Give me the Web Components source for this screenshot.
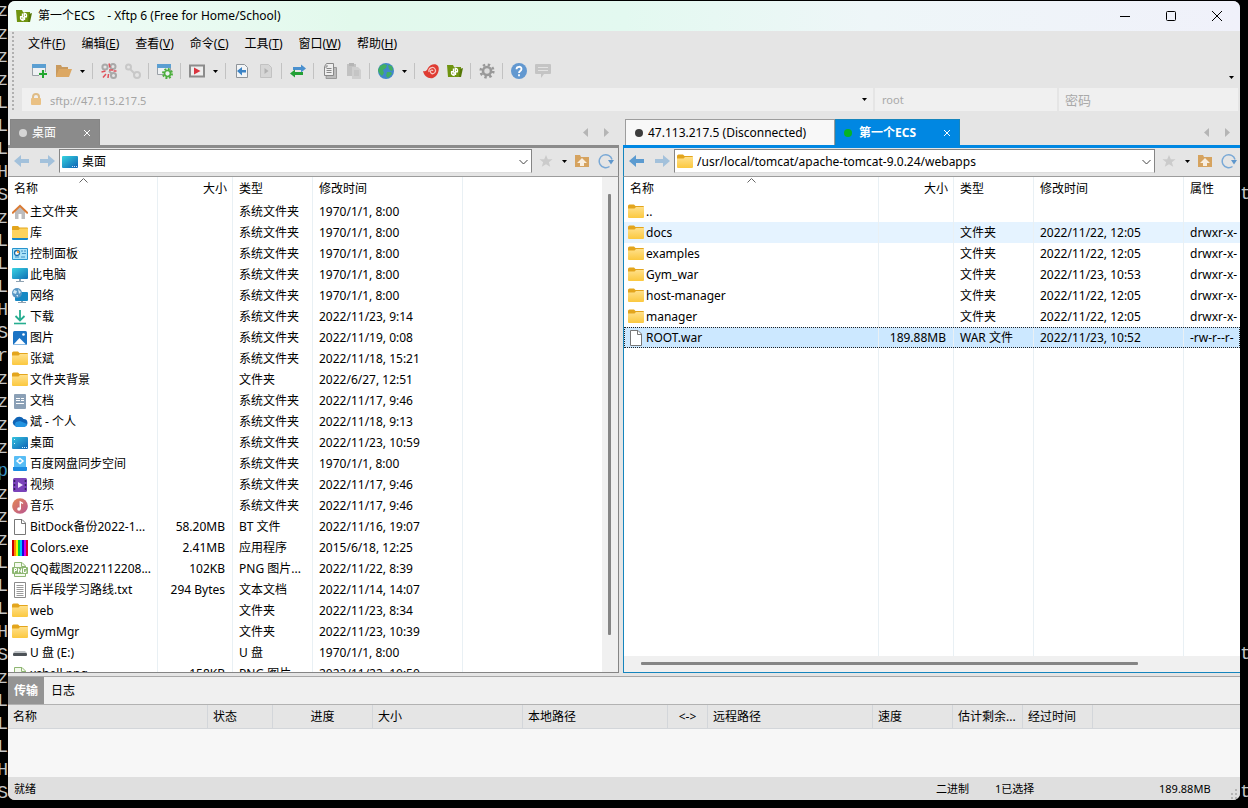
<!DOCTYPE html>
<html lang="zh-CN">
<head>
<meta charset="utf-8">
<title>第一个ECS - Xftp 6</title>
<style>
  html, body { margin: 0; height: 100%; background: #000; overflow: hidden; }
  body { font: 12px/16px "Noto Sans", "Noto Sans CJK SC", sans-serif; color: #000; }
</style>
</head>
<body>
<desk-top>
  <app-window>
    <title-bar></title-bar>
    <tool-area>
      <menu-bar></menu-bar>
      <tool-bar></tool-bar>
      <address-bar></address-bar>
    </tool-area>
    <work-space>
      <file-pane kind="local"></file-pane>
      <file-pane kind="remote"></file-pane>
    </work-space>
    <transfer-panel></transfer-panel>
    <status-bar></status-bar>
  </app-window>
</desk-top>

<script>
const ICONS = {
  app: '<path d="M0 2h6l1 2h7v10H1z" fill="#6f9410"/><path d="M13 6l3-1-2 9h-2z" fill="#557707"/><path d="M6.500 5.500v3.200H4.600C4.200 11 5.200 12 7 12.300V9M8.500 12V8.700h1.900C10.800 6.500 10 5.500 8.300 5.200V8" fill="none" stroke="#fff" stroke-width="1.400"/>',
  newwin: '<path d="M.5 1.500h13v11H.5z" fill="#eef1f3" stroke="#9aa0a6"/><path d="M0 1h14v4H0z" fill="#5b9fd2"/><path d="M11 7v8M7 11h8" stroke="#e5e5e5" stroke-width="4"/><path d="M11 7v8M7 11h8" stroke="#22a630" stroke-width="2"/>',
  open: '<path d="M0 2h5l1 2h6v3H4L1 14H0z" fill="#c99a5e"/><path d="M3 6h13l-3 8H0z" fill="#dca864"/>',
  unlink: '<g fill="none" stroke="#a9a9a9" stroke-width="2"><circle cx="4" cy="4" r="2.600"/><circle cx="12" cy="3.500" r="2.500"/><circle cx="12.500" cy="12.500" r="2.500"/><path d="M8 8l3 3"/></g><path d="M8 .5l1 4M12 7l-4 0M15.500 8h-3M.5 9l4-1M2 14.500l3-3.500M7 15l.500-4" stroke="#e0505a" stroke-width="1.500"/>',
  link: '<g fill="none" stroke="#c8c8c8" stroke-width="2"><circle cx="3.500" cy="4" r="2.500"/><circle cx="12" cy="12" r="3"/><path d="M5 6l5 5"/></g>',
  wingear: '<path d="M.5 1.500h13v10H.5z" fill="#eef1f3" stroke="#9aa0a6"/><path d="M0 1h14v4H0z" fill="#5b9fd2"/><circle cx="10.500" cy="10.500" r="4.500" fill="none" stroke="#4caf3d" stroke-width="2" stroke-dasharray="2 1.500"/><circle cx="10.500" cy="10.500" r="3" fill="#eef1f3" stroke="#4caf3d" stroke-width="1.700"/>',
  play: '<rect x="1" y="2.500" width="14" height="11" fill="#eee" stroke="#8c8c8c" stroke-width="2"/><path d="M5 4.500v7L11.500 8z" fill="#d9343f"/>',
  pageleft: '<path d="M2.500 1.500h8l3 3v10h-11z" fill="#f2f4f6" stroke="#8e9499"/><path d="M3 8l5-4v3h4v2.500H8v3z" fill="#3c84c6"/>',
  pageright: '<path d="M2.500 1.500h8l3 3v10h-11z" fill="#d6d6d6" stroke="#c2c2c2"/><path d="M10.500 8L6.500 5v6z" fill="#b2b2b2"/>',
  swap: '<path d="M16 5.500l-5-4V4H3v3h8v2.500z" fill="#4a90cf"/><path d="M0 10.500l5-4V9h8v3H5v2.500z" fill="#23a035"/>',
  copy: '<path d="M5 4.500h9.500v11H4z" fill="#bbb" stroke="#999"/><path d="M4.500.5h7v12h-9v-9z" fill="#eee" stroke="#888"/><path d="M4.500 5.500h5M4.500 7.500h5M4.500 9.500h5M5 2v2H3" fill="none" stroke="#888"/>',
  paste: '<path d="M1 1h9v12H1z" fill="#c2c2c2"/><path d="M3 0h5v3H3z" fill="#b5b5b5"/><path d="M6 4h6l3 3v9H6z" fill="#cfcfcf"/><path d="M8 8h5M8 10h5M8 12h5" stroke="#bbb"/>',
  globe: '<circle cx="8" cy="8" r="8" fill="#4187cb"/><path d="M2 3l4-2 3 1-1 3-3 2 1 3-2 3-3-3-1-3zM10 2l4 1 1 4-2 1-2-2zM9 9l4 0 1 2-4 4-2-2z" fill="#41ae62"/>',
  shell: '<path d="M0 8c3 1 4-1 5-3 2-4 8-5 10-2 2 3 0 10-5 12C5 16 1 13 0 8z" fill="#df3c33"/><path d="M6 9c-1-4 4-6 6-3s-2 6-4 4 1-4 2-2" fill="none" stroke="#f5c5bf" stroke-width="1.200"/>',
  gear: '<circle cx="8" cy="8" r="6.300" fill="none" stroke="#999" stroke-width="2.600" stroke-dasharray="2.400 2.548"/><circle cx="8" cy="8" r="4" fill="#ddd" stroke="#999" stroke-width="2.600"/>',
  help: '<circle cx="8" cy="8" r="8" fill="#6298d0"/><path d="M5.500 6.200c0-3.200 5-3.200 5-.2C10.500 8 8 8 8 10M8 11.200v2" fill="none" stroke="#fff" stroke-width="1.800"/>',
  chat: '<path d="M1 1h14q1 0 1 1v8q0 1-1 1H9l-3 4v-4H1q-1 0-1-1V2q0-1 1-1z" fill="#c4c4c4"/><path d="M3 4.500h10M3 7.500h10" stroke="#e2e2e2"/>',
  lock: '<path d="M5 8V5a3 3 0 016 0v3" fill="none" stroke="#dfbc86" stroke-width="2"/><rect x="3" y="6" width="10" height="7" rx="1" fill="#eac184"/>',
  back: '<path d="M0 8l7-6v4h8v4H7v4z" fill="var(--arrow)"/>',
  fwd: '<path d="M16 8L9 2v4H1v4h8v4z" fill="#a3c1db"/>',
  star: '<path d="M8 2l1.800 4.200h4.700l-3.600 3.100 1.300 4.500L8 11.200l-4.200 2.600 1.300-4.500L1.500 6.200h4.700z" fill="#cbcbcb"/>',
  updir: '<path d="M1 2h5l1 2h8v10H1z" fill="#d6a35f"/><path d="M8 5l5 5h-3v3H6v-3H3z" fill="#f8eee0"/>',
  refresh: '<path d="M11.500 13.500A6.500 6.500 0 1114 6.500" fill="none" stroke="#7aa9d6" stroke-width="1.500"/><path d="M10 7h6l-3 4.500z" fill="#5f97cc"/>',
  folder: '<path d="M0 2q0-1.500 1.500-1.500H6L7.500 2H15q1 0 1 1v2H0z" fill="#e3a51d"/><path d="M0 4.500h6.500L8 3h8v10q0 1-1 1H1q-1 0-1-1z" fill="url(#f)"/><defs><linearGradient id="f" x2="0" y2="1"><stop stop-color="#ffe08a"/><stop offset="1" stop-color="#fbc83f"/></linearGradient></defs>',
  library: '<path d="M0 2q0-1 1-1h5l1.500 1.500H15q1 0 1 1V6H0z" fill="#e3a51d"/><path d="M0 5h6.500L8 3.500h8V13H0z" fill="#fdd35d"/><path d="M0 13h16v1q0 1-1 1H1q-1 0-1-1z" fill="#1687c8"/>',
  home: '<path d="M3 7l5-5 5 5v8h-3.500v-5h-3v5H3z" fill="#bcbcbe"/><path d="M.8 8.800L8 1.800l7.200 7" fill="none" stroke="#da7b35" stroke-width="2" stroke-linecap="round"/>',
  control: '<rect y="2" width="16" height="12" rx="1" fill="#2794ce"/><rect x="1" y="3" width="14" height="10" fill="#a9e2f8"/><circle cx="5" cy="7" r="2.500" fill="#fff" stroke="#176ba8" stroke-width="1.300"/><path d="M5 7V4.500A2.500 2.500 0 017.500 7z" fill="#f39b3b"/><path d="M9 5h2M12 5h2M10 7.500h4M3 11h4M9 11h4" stroke="#3f8fc4"/>',
  pc: '<rect x="0" y="1" width="16" height="11" rx="1" fill="url(#p)"/><path d="M7 12h2v2H7zM4 14h8v1H4z" fill="#8fa3b3"/><defs><linearGradient id="p" x2="1" y2="1"><stop stop-color="#3ad3e2"/><stop offset="1" stop-color="#0f6fb5"/></linearGradient></defs>',
  network: '<rect x="3" y="4" width="13" height="9" rx="1" fill="#1588c4"/><path d="M9 13h2v1H9zM6 14h8v1H6z" fill="#8fa3b3"/><circle cx="5" cy="5" r="5" fill="#5796c4"/><path d="M2 2l3 1-1 3-3-1zM6 1l3 3-2 2zM4 7l2 0 0 2z" fill="#cfe8f5"/>',
  download: '<path d="M8 1v10M3.500 7L8 11.500 12.500 7" fill="none" stroke="#26ad90" stroke-width="1.800"/><path d="M2 14.500h12" stroke="#26ad90" stroke-width="1.600"/>',
  picture: '<rect x="1" y="1" width="14" height="14" rx="1.500" fill="#1b74c5"/><path d="M1.500 14.500l6-6.500 6.500 6.500z" fill="#fff"/><circle cx="11.500" cy="4.500" r="1.300" fill="#fff"/>',
  document: '<rect x="2" y="1" width="12" height="15" rx="1" fill="#8ba0b6"/><path d="M4 5.500h4M4 7.500h4M9 5.500h3M9 7.500h3M4 10.500h8" stroke="#fff" stroke-width="1.200"/>',
  cloud: '<path d="M4 12.500a4 4 0 01-1-7.500 5 5 0 018.500 0 3.800 3.800 0 011 7.500z" fill="#0f63b5"/><path d="M4 13a4 4 0 010-5l4-1 7 3a3 3 0 01-2.500 3z" fill="#2293e0"/>',
  desktop: '<rect y="2" width="16" height="12" rx="1" fill="url(#d)"/><path d="M10 12.500h5" stroke="#cdf" stroke-dasharray="1 1"/><defs><linearGradient id="d" x2="1" y2="1"><stop stop-color="#35d3df"/><stop offset="1" stop-color="#0d60b4"/></linearGradient></defs>',
  desktop2: '<rect y="2" width="16" height="12" rx="1" fill="url(#e)"/><path d="M2.500 4v2M2.500 8v2M10 12.500h5" stroke="#d6f6ff" stroke-dasharray="1 1"/><defs><linearGradient id="e" x2="1" y2="1"><stop stop-color="#35c3df"/><stop offset="1" stop-color="#0d60b4"/></linearGradient></defs>',
  sync: '<rect x="2" y="0" width="12" height="12" rx="1" fill="#58bdf5"/><path d="M1 11h14v3q0 1-1 1H2q-1 0-1-1z" fill="#1b8de2"/><path d="M8 2.500L11 5 8 7.500 5 5z" fill="none" stroke="#fff" stroke-width="1.400"/>',
  video: '<rect x="1" y="1" width="14" height="14" rx="1.500" fill="#7a43ba"/><path d="M2.500 3v11M13.500 3v11" stroke="#33205e" stroke-width="1.500" stroke-dasharray="2 2"/><path d="M6 5v6l5-3z" fill="#f0e4ff"/>',
  music: '<circle cx="8" cy="8" r="7.800" fill="url(#m)"/><path d="M8.300 11V4l2.700 1.500" fill="none" stroke="#fff" stroke-width="1.400"/><circle cx="7" cy="11" r="1.800" fill="#fff"/><defs><linearGradient id="m" x2="1" y2="1"><stop stop-color="#e58a54"/><stop offset="1" stop-color="#b85391"/></linearGradient></defs>',
  file: '<path d="M2.500.5h7.500l3.500 3.500v11.500h-11z" fill="#fff" stroke="#777"/><path d="M9.500.5V4.500h4" fill="none" stroke="#777"/>',
  text: '<path d="M2.500.5h11v15h-11z" fill="#fff" stroke="#8a8a8a"/><path d="M4.500 3.500h7M4.500 5.500h7M4.500 7.500h7M4.500 9.500h7M4.500 11.500h7M4.500 13.500h7" stroke="#9a9a9a"/>',
  colors: '<path d="M0 0h2v16H0z" fill="#c00"/><path d="M2 0h2v16H2z" fill="#f80"/><path d="M4 0h2v16H4z" fill="#ef0"/><path d="M6 0h2v16H6z" fill="#0c4"/><path d="M8 0h2v16H8z" fill="#0bf"/><path d="M10 0h2v16h-2z" fill="#20d"/><path d="M12 0h2v16h-2z" fill="#c0e"/><path d="M14 0h2v16h-2z" fill="#e00030"/>',
  png: '<path d="M2.500 8V1.500H10L13.500 5v10.500h-11V12" fill="#f4faee" stroke="#8fb673"/><path d="M9.500 1.500v4h4" fill="none" stroke="#8fb673"/><rect y="6" width="16" height="7" rx="1" fill="#8db772"/><path d="M2.500 11.500v-4h2v2h-2M6.500 11.500v-4l3 4v-4M14 7.500h-2.500v4H14v-2" fill="none" stroke="#fff"/>',
  disk: '<path d="M3 6h10l2 2H1z" fill="#bfc3c6"/><rect x="1" y="8" width="14" height="3" rx="1" fill="#4c5257"/>'
};

const RESET = `
  *{box-sizing:border-box}
  button{font:inherit;color:inherit;background:none;border:0;padding:0;margin:0;display:flex;align-items:center}
  input{font:inherit;color:inherit;background:none;border:0;padding:0;margin:0;outline:0;min-width:0}
`;

/* Registers an element whose shadow root is filled from render(element). */
function element(tag, css, render) {
  customElements.define(tag, class extends HTMLElement {
    constructor() { super(); this.attachShadow({ mode: 'open' }); }
    connectedCallback() {
      const t = document.createElement('template');
      t.innerHTML = `<style>${RESET}${css}</style>${render(this)}`;
      this.shadowRoot.replaceChildren(t.content.cloneNode(true));
    }
  });
}
const icon = n => `<ui-icon name="${n}"></ui-icon>`;

element('ui-icon', `:host{display:block;flex:none;width:16px;height:16px}svg{display:block}`,
  el => `<svg width="16" height="16" viewBox="0 0 16 16" aria-hidden="true">${ICONS[el.getAttribute('name')]}</svg>`);

element('ui-caret', `:host{display:block;flex:none;width:5px;height:3px}svg{display:block}`,
  () => `<svg width="5" height="3"><path d="M0 0h5L2.500 3z" fill="#000"/></svg>`);

/* Terminal behind the window: only slivers of its text show on both sides. */
element('desk-top', `
  :host{display:grid;grid-template-columns:8px minmax(0,1fr) 8px;height:100vh;color:#c4c4c4;font:18px/23px "Liberation Mono",monospace}
  div{min-height:0}
  .l{overflow:hidden;display:flex;flex-direction:column;align-items:flex-end}
  b{color:#3b93c4;font-weight:400}
  .mid{padding:1px 0 8px;min-width:0;display:grid}
  .r{display:flex;flex-direction:column;overflow:hidden;padding-top:183px}
  span{height:23px;flex:none}
`, () => `<div class="l" aria-hidden="true">${[...'zzzzLLLHSzLLLHSrzzzzpzzzLLLHSzLLLHS'].map(c => c === 'p' ? '<b>p</b>' : `<span>${c}</span>`).join('')}</div>
  <div class="mid"><slot></slot></div>
  <div class="r" aria-hidden="true">${['t', ...Array(19).fill(''), 't', ...Array(5).fill(''), 't'].map(c => `<span>${c}</span>`).join('')}</div>`);

element('app-window', `
  :host{display:flex;flex-direction:column;min-width:0;min-height:0;background:#e5e5e5;border-radius:7px;overflow:hidden;color:#000;font:12px/16px "Noto Sans","Noto Sans CJK SC",sans-serif}
`, () => `<slot></slot>`);

element('title-bar', `
  :host{display:flex;align-items:center;height:30px;flex:none;padding-left:8px;background:linear-gradient(90deg,#f1fcf8 0%,#e2f9ec 28%,#e3f9f0 50%,#eef6f8 70%,#f0f1fa 100%)}
  h1{font:inherit;margin:0 0 0 6px;flex:1;white-space:pre}
  button{width:46px;height:30px;justify-content:center}
`, () => `${icon('app')}<h1>第一个ECS    - Xftp 6 (Free for Home/School)</h1>
  <button aria-label="最小化"><svg width="10" height="10"><path d="M0 5.500h10" stroke="#000"/></svg></button>
  <button aria-label="最大化"><svg width="10" height="10"><rect x=".5" y=".5" width="9" height="9" rx="1" fill="none" stroke="#000"/></svg></button>
  <button aria-label="关闭"><svg width="10" height="10"><path d="M0 0l10 10M10 0L0 10" stroke="#000"/></svg></button>`);

element('tool-area', `
  :host{display:grid;grid-template-columns:12px minmax(0,1fr);padding:1px 2px 8px 2px;flex:none}
  .grip{width:2px;margin-left:2px;background:repeating-linear-gradient(#b0b0b0 0 2px,transparent 2px 4px)}
`, () => `<div class="grip"></div><div><slot></slot></div>`);

element('menu-bar', `:host{display:block}nav{display:flex;gap:16px;height:24px;padding-left:6px}`,
  () => `<nav>${[['文件', 'F'], ['编辑', 'E'], ['查看', 'V'], ['命令', 'C'], ['工具', 'T'], ['窗口', 'W'], ['帮助', 'H']]
    .map(([t, k]) => `<button><span>${t}(<u>${k}</u>)</span></button>`).join('')}</nav>`);

element('tool-bar', `
  :host{display:flex;align-items:center;height:32px;padding:0 0 2px 6px;box-sizing:border-box}
  button{width:24px;height:24px;justify-content:center}
  button.c{width:13px}
  i{width:1px;height:16px;margin:0 4px 0 3px;background:#c2c2c2}
  .more{margin:12px 0 0 auto}
`, () => 'newwin open ^ | unlink link | wingear | play ^ | pageleft pageright | swap | copy paste | globe ^ | shell app | gear | help chat'
    .split(' ').map(n => n === '|' ? '<i></i>' : n === '^' ? '<button class="c" aria-label="更多"><ui-caret></ui-caret></button>'
      : `<button aria-label="${n}">${icon(n)}</button>`).join('') + '<button class="c more" aria-label="选项"><ui-caret></ui-caret></button>');

element('address-bar', `
  :host{display:grid;grid-template-columns:minmax(0,851fr) minmax(0,182fr) minmax(0,179fr);gap:2px;height:23px;color:#a5a5a5;font-size:11px}
  label{display:flex;align-items:center;background:#f0f0f0;padding:0 7px}
  input{flex:1;padding-top:2px}
  input::placeholder{color:#a9a9a9;opacity:1}
  .h{gap:6px;padding:0 6px}
  .u input{padding:0}
  .p{font-size:13px;padding:0 6px}
  .p input{padding:0}
`, () => `<label class="h">${icon('lock')}<input aria-label="主机" value="sftp://47.113.217.5"><ui-caret></ui-caret></label>
  <label class="u"><input aria-label="用户名" placeholder="root"></label>
  <label class="p"><input aria-label="密码" type="password" placeholder="密码"></label>`);

element('work-space', `:host{flex:1;min-height:0;display:grid;grid-template-columns:minmax(0,611fr) minmax(0,617fr);gap:4px}`, () => `<slot></slot>`);

const F = '系统文件夹';
const PANES = {
  local: {
    tabs: [{ text: '桌面', dot: '#d5d5d5', cls: 'on' }],
    icon: 'desktop', path: '桌面', cols: [150, 75, 80, 150], heads: ['名称', '大小', '类型', '修改时间', ''],
    rows: [
      ['home', '主文件夹', '', F, '1970/1/1, 8:00'], ['library', '库', '', F, '1970/1/1, 8:00'],
      ['control', '控制面板', '', F, '1970/1/1, 8:00'], ['pc', '此电脑', '', F, '1970/1/1, 8:00'],
      ['network', '网络', '', F, '1970/1/1, 8:00'], ['download', '下载', '', F, '2022/11/23, 9:14'],
      ['picture', '图片', '', F, '2022/11/19, 0:08'], ['folder', '张斌', '', F, '2022/11/18, 15:21'],
      ['folder', '文件夹背景', '', '文件夹', '2022/6/27, 12:51'], ['document', '文档', '', F, '2022/11/17, 9:46'],
      ['cloud', '斌 - 个人', '', F, '2022/11/18, 9:13'], ['desktop2', '桌面', '', F, '2022/11/23, 10:59'],
      ['sync', '百度网盘同步空间', '', F, '1970/1/1, 8:00'], ['video', '视频', '', F, '2022/11/17, 9:46'],
      ['music', '音乐', '', F, '2022/11/17, 9:46'], ['file', 'BitDock备份2022-1...', '58.20MB', 'BT 文件', '2022/11/16, 19:07'],
      ['colors', 'Colors.exe', '2.41MB', '应用程序', '2015/6/18, 12:25'], ['png', 'QQ截图2022112208...', '102KB', 'PNG 图片...', '2022/11/22, 8:39'],
      ['text', '后半段学习路线.txt', '294 Bytes', '文本文档', '2022/11/14, 14:07'], ['folder', 'web', '', '文件夹', '2022/11/23, 8:34'],
      ['folder', 'GymMgr', '', '文件夹', '2022/11/23, 10:39'], ['disk', 'U 盘 (E:)', '', 'U 盘', '1970/1/1, 8:00'],
      ['png', 'xshell.png', '158KB', 'PNG 图片...', '2022/11/22, 10:50']
    ]
  },
  remote: {
    tabs: [{ text: '47.113.217.5 (Disconnected)', dot: '#3c3c3c', cls: 'off' }, { text: '第一个ECS', dot: '#06b424', cls: 'on live' }],
    icon: 'folder', path: '/usr/local/tomcat/apache-tomcat-9.0.24/webapps', cols: [255, 75, 80, 150], heads: ['名称', '大小', '类型', '修改时间', '属性'],
    rows: [
      ['folder', '..', '', '', '', ''], ['folder', 'docs', '', '文件夹', '2022/11/22, 12:05', 'drwxr-x-', 'hover'],
      ['folder', 'examples', '', '文件夹', '2022/11/22, 12:05', 'drwxr-x-'], ['folder', 'Gym_war', '', '文件夹', '2022/11/23, 10:53', 'drwxr-x-'],
      ['folder', 'host-manager', '', '文件夹', '2022/11/22, 12:05', 'drwxr-x-'], ['folder', 'manager', '', '文件夹', '2022/11/22, 12:05', 'drwxr-x-'],
      ['file', 'ROOT.war', '189.88MB', 'WAR 文件', '2022/11/23, 10:52', '-rw-r--r-', 'sel']
    ]
  }
};

element('file-pane', `
  :host{display:flex;flex-direction:column;min-width:0;min-height:0;--accent:#8b8b8b;--line:#858585;--arrow:#a3c1db}
  :host([kind=remote]){--accent:#0087e2;--line:#1685bd;--arrow:#5c9bd0}
  pane-list{flex:1;min-height:0}
`, el => `<pane-tabs kind="${el.getAttribute('kind')}"></pane-tabs><pane-nav kind="${el.getAttribute('kind')}"></pane-nav><pane-list kind="${el.getAttribute('kind')}"></pane-list>`);

element('pane-tabs', `
  :host{display:flex;height:29px;padding-left:2px;border-bottom:3px solid var(--accent);flex:none;box-sizing:border-box}
  .tab{height:26px;padding:0 8px;gap:5px;border:1px solid #9d9d9d;border-bottom:0;flex:none}
  .tab span{flex:1;text-align:left;white-space:nowrap}
  .on{background:var(--accent);border-color:var(--line);color:#fff;width:90px}
  .off{background:#f8f8f8;width:210px;padding-left:9px}
  .live{width:125px;font-weight:700;gap:7px}
  .dot{width:8px;height:8px;border-radius:50%;flex:none}
  .x{flex:none;margin-right:1px}
  .go{width:20px;justify-content:center}
  .first{margin-left:auto}
  .last{margin-right:3px}
`, el => PANES[el.getAttribute('kind')].tabs.map(t => `<button class="tab ${t.cls}"><i class="dot" style="background:${t.dot}"></i><span>${t.text}</span>${t.cls.startsWith('on') ? '<svg class="x" width="6" height="6"><path d="M0 0l6 6M6 0L0 6" stroke="#fff"/></svg>' : ''}</button>`).join('') +
  `<button class="go first" aria-label="向左"><svg width="6" height="9"><path d="M5 0v9L0 4.500z" fill="#b5b5b5"/></svg></button><button class="go last" aria-label="向右"><svg width="6" height="9"><path d="M1 0v9l5-4.500z" fill="#b5b5b5"/></svg></button>`);

element('pane-nav', `
  :host{display:flex;align-items:center;height:29px;box-sizing:border-box;padding:0 4px 2px 5px;flex:none;border-bottom:1px solid #9c9c9c;border-left:1px solid transparent;border-right:1px solid var(--line)}
  :host([kind=remote]){border-left-color:var(--line);border-right:0;padding-right:3px}
  .path{flex:1;display:flex;align-items:center;gap:4px;height:24px;background:#fff;border:1px solid #858585;border-bottom-color:#ddd;padding:2px 3px 0 2px;margin:0 6px 0 4px;min-width:0}
  .path input{flex:1}
  .b{margin-right:9px}
  .c{width:20px;justify-content:center;height:16px}
  .r{margin-left:8px}
`, el => { const p = PANES[el.getAttribute('kind')]; return `
  <button class="b" aria-label="后退">${icon('back')}</button><button aria-label="前进">${icon('fwd')}</button>
  <label class="path">${icon(p.icon)}<input aria-label="路径" value="${p.path}"><svg width="9" height="5"><path d="M.5 0l4 4 4-4" fill="none" stroke="#444"/></svg></label>
  <button aria-label="收藏">${icon('star')}</button><button class="c" aria-label="收藏列表"><ui-caret></ui-caret></button>
  <button aria-label="上一级">${icon('updir')}</button><button class="r" aria-label="刷新">${icon('refresh')}</button>`; });

element('pane-list', `
  :host{display:flex;background:#fff;border-bottom:1px solid var(--line);overflow:hidden}
  :host([kind=local]){border-right:1px solid var(--line)}
  :host([kind=remote]){flex-direction:column;border-left:1px solid var(--line)}
  .view{flex:1;min-width:0;min-height:0;overflow:hidden}
  table{width:100%;height:100%;table-layout:fixed;border-collapse:separate;border-spacing:0}
  th,td{padding:0 6px;border-right:1px solid #e9f0f4;white-space:nowrap;overflow:hidden;text-align:left;font-weight:400;line-height:16px}
  th:last-child,td:last-child{border-right:0;padding-right:0}
  th{height:24px;position:relative}
  td{height:21px}
  td:first-child{padding-left:4px;padding-right:0}
  .n{text-align:right;padding-right:7px}
  th.n{padding-right:5px}
  .name{display:flex;align-items:center;gap:2px}
  .fill td{height:auto}
  .hover{background:#e5f3ff}
  .sel{background:#cce8ff;outline:1px dotted #222;outline-offset:-1px}
  .sort{position:absolute;left:50%;top:1px;margin-left:-4px}
  .v{width:16px;background:#f0f0f0;padding:17px 7px 37px 6px;display:flex;flex:none}
  .h{height:16px;background:#f0f0f0;padding:6px 102px 7px 17px;display:flex;flex:none}
  .thumb{flex:1;background:#858585;border-radius:1px}
`, el => { const k = el.getAttribute('kind'), p = PANES[k]; return `
  <div class="view"><table>
  <colgroup>${p.cols.map(w => `<col style="width:${w}px">`).join('')}<col></colgroup>
  <thead><tr>${p.heads.map((h, i) => `<th scope="col"${i === 1 ? ' class="n"' : ''}>${h}${i ? '' : '<svg class="sort" width="9" height="5"><path d="M.5 4.500l4-4 4 4" fill="none" stroke="#666"/></svg>'}</th>`).join('')}</tr></thead>
  <tbody>${p.rows.map(r => `<tr class="${r[6] || ''}"><td><div class="name">${icon(r[0])}<span>${r[1]}</span></div></td><td class="n">${r[2]}</td><td>${r[3]}</td><td>${r[4]}</td><td>${r[5] || ''}</td></tr>`).join('')}
  <tr class="fill"><td></td><td></td><td></td><td></td><td></td></tr></tbody></table></div>
  <div class="${k === 'local' ? 'v' : 'h'}"><div class="thumb"></div></div>`; });

element('transfer-panel', `
  :host{display:block;box-sizing:border-box;margin-top:3px;border-top:1px solid #a8a8a8;background:#f7f7f7;height:101px;flex:none;overflow:hidden}
  .tabs{display:flex;height:28px;background:#f0f0f0;border-bottom:1px solid #b2b2b2}
  .tabs button{padding:0 7px}
  .tabs button:first-of-type{background:#949494;color:#fff;font-weight:700;padding:0 6px}
  table{width:100%;table-layout:fixed;border-collapse:separate;border-spacing:0;background:#e5e5e5}
  th{height:24px;padding:0 5px;border-right:1px solid #d3d6da;border-bottom:1px solid #d3d6da;text-align:left;font-weight:400;white-space:nowrap;overflow:hidden}
  th:last-child{border-right:0}
  .m{text-align:center}
`, () => `<div class="tabs"><button>传输</button><button>日志</button></div>
  <table><colgroup>${[200, 65, 100, 150, 145, 40, 165, 80, 70, 70].map(w => `<col style="width:${w}px">`).join('')}<col></colgroup>
  <thead><tr>${['名称', '状态', '进度', '大小', '本地路径', '&lt;-&gt;', '远程路径', '速度', '估计剩余...', '经过时间', ''].map((h, i) => `<th scope="col"${i === 2 || i === 5 ? ' class="m"' : ''}>${h}</th>`).join('')}</tr></thead></table>`);

element('status-bar', `
  :host{display:flex;align-items:center;height:23px;box-sizing:border-box;background:#dfdfdf;padding:0 2px 0 6px;font-size:11px;flex:none}
  .ready{flex:1}
  .mode{width:59px}.count{width:164px}.size{width:69px}
  svg{align-self:flex-end}
`, () => `<span class="ready">就绪</span><span class="mode">二进制</span><span class="count">1已选择</span><span class="size">189.88MB</span>
  <svg width="10" height="12"><path d="M7 1h2v2H7zM7 5h2v2H7zM3 5h2v2H3zM7 9h2v2H7zM3 9h2v2H3z" fill="#b5b5b5"/></svg>`);
</script>
</body>
</html>
